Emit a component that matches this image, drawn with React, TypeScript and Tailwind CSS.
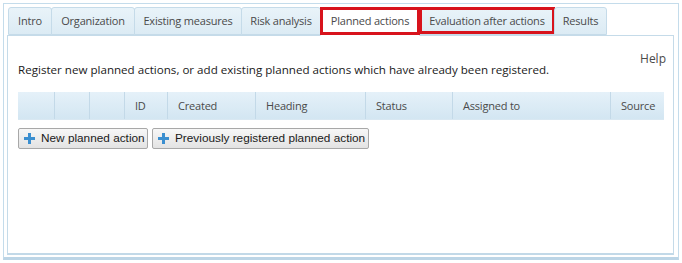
import React from "react";

const tabs: { label: string; w: number; active?: boolean; red?: boolean }[] = [
  { label: "Intro", w: 44 },
  { label: "Organization", w: 84 },
  { label: "Existing measures", w: 108 },
  { label: "Risk analysis", w: 80 },
  { label: "Planned actions", w: 100, active: true, red: true },
  { label: "Evaluation after actions", w: 136, red: true },
  { label: "Results", w: 53 },
];

const cols: { label: string; w: number }[] = [
  { label: "", w: 36 },
  { label: "", w: 35 },
  { label: "", w: 35 },
  { label: "ID", w: 43 },
  { label: "Created", w: 88 },
  { label: "Heading", w: 110 },
  { label: "Status", w: 87 },
  { label: "Assigned to", w: 158 },
  { label: "Source", w: 54 },
];

function Plus() {
  return (
    <svg width="11" height="11" viewBox="0 0 11 11" className="shrink-0">
      <rect x="4" y="0" width="3" height="11" fill="#3b8fd0" />
      <rect x="0" y="4" width="11" height="3" fill="#3b8fd0" />
    </svg>
  );
}

export default function App() {
  return (
    <div className="w-[682px] h-[263px] bg-white pt-[3px] pl-[3px]" style={{ fontFamily: '"Open Sans", sans-serif' }}>
      <div className="w-[676px] h-[257px] border border-[#c4dceb] border-b-[3px] border-b-[#bcd5e6] pt-[3px] pl-[3px]">
        <div className="flex pl-[1px] h-[28px] items-end">
          {tabs.map((t) => (
            <div
              key={t.label}
              className={
                "relative h-[28px] flex items-center justify-center text-[11px] tracking-[-0.2px] text-[#4a4a4a] border border-[#c5dbe9] rounded-t-[3px] -mr-[1px] whitespace-nowrap " +
                (t.active ? "bg-white border-b-white z-10 h-[29px] -mb-[1px]" : "bg-gradient-to-b from-[#e9f3f9] to-[#dcebf4]")
              }
              style={{ width: t.w }}
            >
              {t.label}
              {t.red && (
                <div className="absolute -left-[1px] -top-[1px] -right-[1px] bottom-[0px] border-[3px] border-[#d8131c] pointer-events-none" />
              )}
            </div>
          ))}
        </div>
        <div className="w-[667px] h-[220px] border border-[#c5dbe9] border-b-[2px] border-b-[#c2d9e8] bg-white relative">
          <div className="absolute right-[7px] top-[14px] text-[12px] text-[#4a4a4a]">Help</div>
          <div className="pt-[25px] pl-[10px] text-[11.6px] text-[#1a1a1a] whitespace-nowrap">
            Register new planned actions, or add existing planned actions which have already been registered.
          </div>
          <div className="mt-[14px] ml-[10px] flex h-[28px] w-[646px] bg-gradient-to-b from-[#e5f1f9] to-[#d3e6f2] border-b border-[#d9e8f2]">
            {cols.map((c, i) => (
              <div
                key={i}
                className={"h-full flex items-center pl-[10px] text-[11px] tracking-[-0.2px] text-[#4a4a4a] " + (i > 0 ? "border-l border-[#c3d9e8]" : "")}
                style={{ width: c.w }}
              >
                {c.label}
              </div>
            ))}
          </div>
          <div className="mt-[8px] ml-[10px] flex gap-[4px]" style={{ fontFamily: '"Liberation Sans", Arial, sans-serif' }}>
            <button className="h-[21px] flex items-center gap-[6px] pl-[5px] border border-[#a8a8a8] rounded-[2px] bg-gradient-to-b from-[#f7f7f7] to-[#e3e3e3] text-[11.8px] text-[#1a1a1a] w-[130px] whitespace-nowrap">
              <Plus />
              New planned action
            </button>
            <button className="h-[21px] flex items-center gap-[6px] pl-[5px] border border-[#a8a8a8] rounded-[2px] bg-gradient-to-b from-[#f7f7f7] to-[#e3e3e3] text-[11.8px] text-[#1a1a1a] w-[217px] whitespace-nowrap">
              <Plus />
              Previously registered planned action
            </button>
          </div>
        </div>
      </div>
    </div>
  );
}
